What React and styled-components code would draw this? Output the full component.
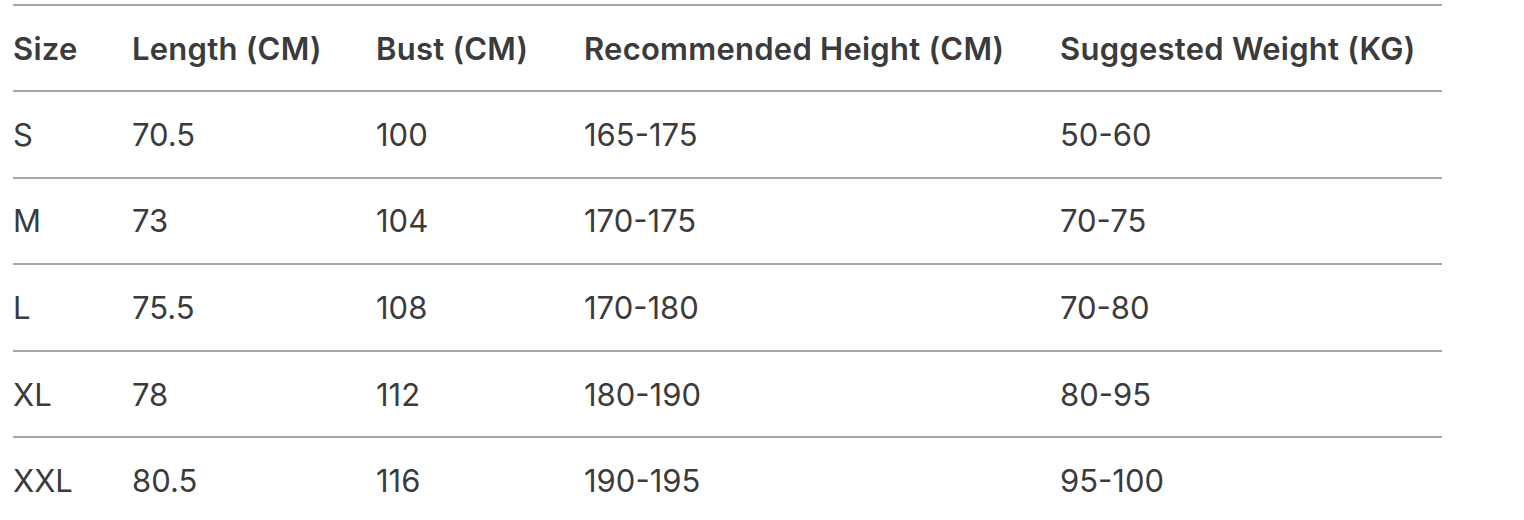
import styled, { createGlobalStyle } from 'styled-components'

const Global = createGlobalStyle`
  body {
    margin: 0;
    background: #ffffff;
    font-family: Inter, "Noto Sans", "Liberation Sans", sans-serif;
    color: #3b3b3b;
  }
`;

const Wrap = styled.div`
  padding: 4px 0 0 13px;
`;

const SizeTable = styled.table`
  width: 1429px;
  table-layout: fixed;
  border-collapse: separate;
  border-spacing: 0;
  border-top: 2px solid #a7a7a7;
`;

const Cell = styled.td`
  box-sizing: border-box;
  height: ${p => (p.$head ? '86px' : '86.6px')};
  padding: 0;
  border-bottom: 2px solid #a7a7a7;
  text-align: left;
  vertical-align: middle;
  font-size: 31px;
  font-weight: ${p => (p.$head ? 600 : 400)};
  letter-spacing: ${p => (p.$head ? '0.25px' : '0')};
  white-space: nowrap;
`;

const columns = [
  { label: 'Size', width: 119 },
  { label: 'Length (CM)', width: 244 },
  { label: 'Bust (CM)', width: 208 },
  { label: 'Recommended Height (CM)', width: 476 },
  { label: 'Suggested Weight (KG)', width: 382 },
];

const rows = [
  ['S', '70.5', '100', '165-175', '50-60'],
  ['M', '73', '104', '170-175', '70-75'],
  ['L', '75.5', '108', '170-180', '70-80'],
  ['XL', '78', '112', '180-190', '80-95'],
  ['XXL', '80.5', '116', '190-195', '95-100'],
];

export default function App() {
  return (
    <Wrap>
      <Global />
      <SizeTable>
        <colgroup>
          {columns.map(c => <col key={c.label} style={{ width: c.width }} />)}
        </colgroup>
        <thead>
          <tr>
            {columns.map(c => <Cell as="th" $head key={c.label}>{c.label}</Cell>)}
          </tr>
        </thead>
        <tbody>
          {rows.map(r => (
            <tr key={r[0]}>
              {r.map((v, i) => <Cell key={i}>{v}</Cell>)}
            </tr>
          ))}
        </tbody>
      </SizeTable>
    </Wrap>
  );
}
